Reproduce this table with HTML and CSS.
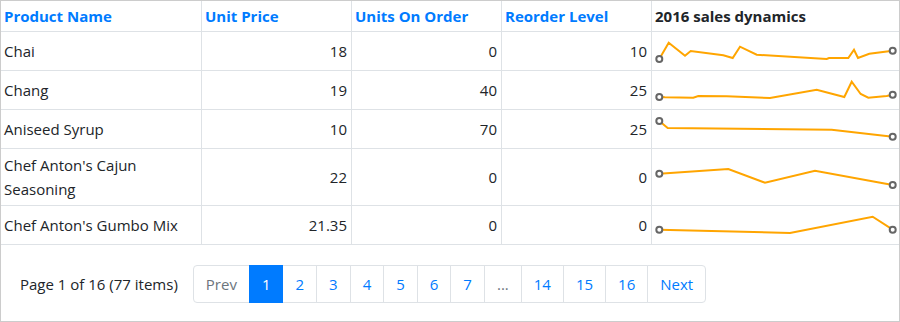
FILE: index.html
```html
<!DOCTYPE html>
<html lang="en">
<head>
<meta charset="utf-8">
<title>Products</title>
<link rel="stylesheet" href="styles.css">
</head>
<body>
<div class="grid">
  <table class="data">
    <colgroup>
      <col class="c-name">
      <col class="c-num">
      <col class="c-num">
      <col class="c-num">
      <col class="c-spark">
    </colgroup>
    <thead>
      <tr>
        <th class="sortable">Product Name</th>
        <th class="sortable">Unit Price</th>
        <th class="sortable">Units On Order</th>
        <th class="sortable">Reorder Level</th>
        <th class="plain">2016 sales dynamics</th>
      </tr>
    </thead>
    <tbody>
      <tr>
        <td>Chai</td>
        <td class="num">18</td>
        <td class="num">0</td>
        <td class="num">10</td>
        <td class="spark">
          <svg class="sparkline" viewBox="0 0 247 38" width="247" height="38">
            <polyline class="line" points="7.3,27 16.7,10.7 33,23.7 38.7,19 71.3,23.3 80.7,26 88,14.7 104.7,22.7 174.7,27 177,26 196.3,26 202,17.7 206,26 217.3,21.7 240.7,18.7"/>
            <circle class="marker" cx="7.3" cy="27" r="3"/>
            <circle class="marker" cx="240.7" cy="18.7" r="3"/>
          </svg>
        </td>
      </tr>
      <tr>
        <td>Chang</td>
        <td class="num">19</td>
        <td class="num">40</td>
        <td class="num">25</td>
        <td class="spark">
          <svg class="sparkline" viewBox="0 0 247 38" width="247" height="38">
            <polyline class="line" points="7.3,26 13,26.3 41.3,26.7 46.3,25 74.7,25.3 118,27 164.7,18.7 192.3,26 199.7,10.7 208.7,23 216.3,26.7 234.7,25 240.7,23.7"/>
            <circle class="marker" cx="7.3" cy="26" r="3"/>
            <circle class="marker" cx="240.7" cy="23.7" r="3"/>
          </svg>
        </td>
      </tr>
      <tr>
        <td>Aniseed Syrup</td>
        <td class="num">10</td>
        <td class="num">70</td>
        <td class="num">25</td>
        <td class="spark">
          <svg class="sparkline" viewBox="0 0 247 38" width="247" height="38">
            <polyline class="line" points="7.3,11 15.7,18 179.7,19.7 240.7,26.7"/>
            <circle class="marker" cx="7.3" cy="11" r="3"/>
            <circle class="marker" cx="240.7" cy="26.7" r="3"/>
          </svg>
        </td>
      </tr>
      <tr>
        <td>Chef Anton's Cajun Seasoning</td>
        <td class="num">22</td>
        <td class="num">0</td>
        <td class="num">0</td>
        <td class="spark">
          <svg class="sparkline" viewBox="0 0 247 38" width="247" height="38">
            <polyline class="line" points="7.3,15.7 76.3,11 113,24.7 163,12.7 240.7,27"/>
            <circle class="marker" cx="7.3" cy="15.7" r="3"/>
            <circle class="marker" cx="240.7" cy="27" r="3"/>
          </svg>
        </td>
      </tr>
      <tr>
        <td>Chef Anton's Gumbo Mix</td>
        <td class="num">21.35</td>
        <td class="num">0</td>
        <td class="num">0</td>
        <td class="spark">
          <svg class="sparkline" viewBox="0 0 247 38" width="247" height="38">
            <polyline class="line" points="7.3,23.7 138,27 220.7,10.7 240.7,23.7"/>
            <circle class="marker" cx="7.3" cy="23.7" r="3"/>
            <circle class="marker" cx="240.7" cy="23.7" r="3"/>
          </svg>
        </td>
      </tr>
    </tbody>
  </table>
  <div class="pager">
    <span class="info">Page 1 of 16 (77 items)</span>
    <nav class="pages">
      <span class="pg disabled first">Prev</span>
      <span class="pg active">1</span>
      <a class="pg">2</a>
      <a class="pg">3</a>
      <a class="pg">4</a>
      <a class="pg">5</a>
      <a class="pg">6</a>
      <a class="pg">7</a>
      <span class="pg ellipsis">...</span>
      <a class="pg">14</a>
      <a class="pg">15</a>
      <a class="pg">16</a>
      <a class="pg last">Next</a>
    </nav>
  </div>
</div>
</body>
</html>
```

FILE: styles.css
```css
html, body {
  margin: 0;
  padding: 0;
  background: #ffffff;
}

body {
  font-family: "Open Sans", "Noto Sans", sans-serif;
  font-size: 15px;
  line-height: 24px;
  color: #212529;
}

.grid {
  width: 900px;
  height: 322px;
  box-sizing: border-box;
  border: 1px solid #cccccc;
  display: flex;
  flex-direction: column;
}

.data {
  border-collapse: separate;
  border-spacing: 0;
  table-layout: fixed;
  width: 898px;
}

.c-name { width: 201px; }
.c-num { width: 150px; }
.c-spark { width: 247px; }

.data th,
.data td {
  border-right: 1px solid #dee2e6;
  border-bottom: 1px solid #dee2e6;
  vertical-align: middle;
  text-align: left;
  overflow: hidden;
}

.data th:last-child,
.data td:last-child {
  border-right: none;
}

.data th {
  padding: 3px 3px;
  font-weight: 700;
  white-space: nowrap;
}

.data th.sortable {
  color: #007bff;
}

.data th.plain {
  color: #212529;
}

.data td {
  padding: 4px 3px;
}

.data td.num {
  text-align: right;
  padding-right: 4px;
}

.data td.spark {
  padding: 0;
}

.sparkline {
  display: block;
}

.sparkline .line {
  fill: none;
  stroke: #ffa500;
  stroke-width: 2;
  stroke-linejoin: miter;
}

.sparkline .marker {
  fill: #ffffff;
  stroke: #666666;
  stroke-width: 2;
}

.pager {
  display: flex;
  align-items: center;
  padding: 20px 0 18px 19px;
}

.info {
  margin-right: 15px;
}

.pages {
  display: flex;
}

.pg {
  display: block;
  padding: 6px 12px;
  line-height: 24px;
  border: 1px solid #dee2e6;
  margin-left: -1px;
  color: #007bff;
  background: #ffffff;
  text-decoration: none;
}

.pg.first {
  margin-left: 0;
  border-radius: 4px 0 0 4px;
}

.pg.last {
  border-radius: 0 4px 4px 0;
}

.pg.disabled {
  color: #6c757d;
}

.pg.ellipsis {
  color: #6c757d;
}

.pg.active {
  background: #007bff;
  border-color: #007bff;
  color: #ffffff;
  position: relative;
}
```
